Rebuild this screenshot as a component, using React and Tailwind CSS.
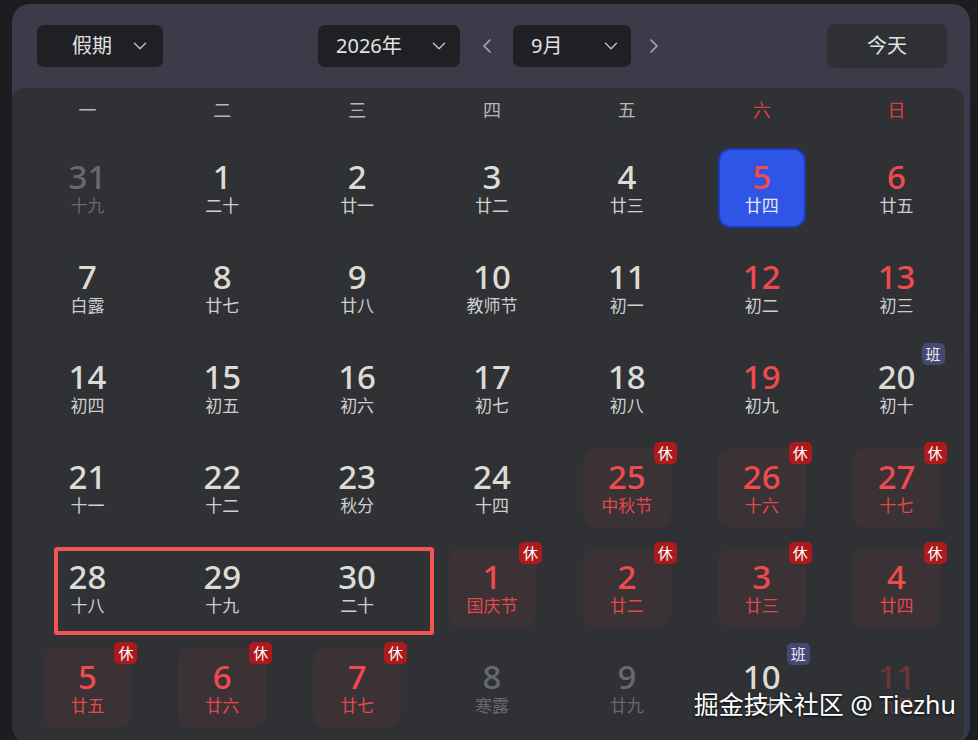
import React from 'react';
import { ChevronDown, ChevronLeft, ChevronRight } from 'lucide-react';

const WEEKDAYS = ['一', '二', '三', '四', '五', '六', '日'];

// rest = 休, work = 班, muted = 其他月份
const WEEKS = [
  [
    { d: 31, l: '十九', muted: true },
    { d: 1, l: '二十' },
    { d: 2, l: '廿一' },
    { d: 3, l: '廿二' },
    { d: 4, l: '廿三' },
    { d: 5, l: '廿四', today: true },
    { d: 6, l: '廿五' },
  ],
  [
    { d: 7, l: '白露' },
    { d: 8, l: '廿七' },
    { d: 9, l: '廿八' },
    { d: 10, l: '教师节' },
    { d: 11, l: '初一' },
    { d: 12, l: '初二' },
    { d: 13, l: '初三' },
  ],
  [
    { d: 14, l: '初四' },
    { d: 15, l: '初五' },
    { d: 16, l: '初六' },
    { d: 17, l: '初七' },
    { d: 18, l: '初八' },
    { d: 19, l: '初九' },
    { d: 20, l: '初十', work: true },
  ],
  [
    { d: 21, l: '十一' },
    { d: 22, l: '十二' },
    { d: 23, l: '秋分' },
    { d: 24, l: '十四' },
    { d: 25, l: '中秋节', rest: true },
    { d: 26, l: '十六', rest: true },
    { d: 27, l: '十七', rest: true },
  ],
  [
    { d: 28, l: '十八' },
    { d: 29, l: '十九' },
    { d: 30, l: '二十' },
    { d: 1, l: '国庆节', rest: true },
    { d: 2, l: '廿二', rest: true },
    { d: 3, l: '廿三', rest: true },
    { d: 4, l: '廿四', rest: true },
  ],
  [
    { d: 5, l: '廿五', rest: true },
    { d: 6, l: '廿六', rest: true },
    { d: 7, l: '廿七', rest: true },
    { d: 8, l: '寒露', muted: true },
    { d: 9, l: '廿九', muted: true },
    { d: 10, l: '三十', work: true },
    { d: 11, l: '九月', muted: true },
  ],
];

const Select = ({ label, className }) => (
  <div
    className={`flex h-[42px] items-center justify-between rounded-[7px] bg-[#1f2023] text-[20px] text-[#e2e2e2] ${className}`}
  >
    <span>{label}</span>
    <ChevronDown size={22} strokeWidth={1.6} className="text-[#bdbdbd]" />
  </div>
);

const DayCell = ({ cell, col }) => {
  const weekend = col >= 5;
  let numColor = 'text-[#dedbd4]';
  let lunarColor = 'text-[#cfcfcf]';
  let box = '';

  if (cell.today) {
    numColor = 'text-[#f24a4f]';
    lunarColor = 'text-[#e6e6f0]';
    box = 'bg-[#2f55e6] border-2 border-[#1c3bb8]';
  } else if (cell.rest) {
    numColor = 'text-[#ef4b4e]';
    lunarColor = 'text-[#e2484b]';
    box = 'bg-[#3a3234]';
  } else if (cell.muted) {
    numColor = weekend ? 'text-[#6b3639]' : 'text-[#67696c]';
    lunarColor = weekend ? 'text-[#6b3639]' : 'text-[#67696c]';
  } else if (weekend && !cell.work) {
    numColor = 'text-[#ef4b4e]';
  }

  return (
    <div className="flex h-[100px] items-center justify-center">
      <div className={`relative flex h-[80px] w-[88px] flex-col items-center justify-center rounded-[13px] ${box}`}>
        <span className={`text-[33px] font-medium leading-[34px] ${numColor}`}>{cell.d}</span>
        <span className={`mt-[2px] text-[17px] leading-[20px] ${lunarColor}`}>{cell.l}</span>
        {cell.rest && (
          <span className="absolute -right-[6px] -top-[6px] flex h-[22px] w-[23px] items-center justify-center rounded-[5px] bg-[#ad1a1c] text-[15px] text-white">
            休
          </span>
        )}
        {cell.work && (
          <span className="absolute -right-[4px] -top-[5px] flex h-[22px] w-[23px] items-center justify-center rounded-[5px] bg-[#444872] text-[15px] text-[#ececf4]">
            班
          </span>
        )}
      </div>
    </div>
  );
};

export default function App() {
  return (
    <div
      className="h-[740px] w-[978px] overflow-hidden bg-[#1c1d20] pt-[4px] pl-[12px]"
      style={{ fontFamily: '"Noto Sans", "Noto Sans CJK SC", sans-serif' }}
    >
      <div className="relative flex h-[740px] w-[958px] flex-col overflow-hidden rounded-[18px] bg-gradient-to-b from-[#3b3b4a] to-[#363747]">
        {/* 头部 */}
        <div className="grid h-[84px] shrink-0 grid-cols-[1fr_auto_1fr] items-center pl-[25px] pr-[23px]">
          <div>
            <Select label="假期" className="w-[126px] pl-[35px] pr-[12px]" />
          </div>
          <div className="flex items-center">
            <Select label="2026年" className="w-[142px] pl-[18px] pr-[10px]" />
            <ChevronLeft size={24} strokeWidth={1.6} className="ml-[15px] mr-[14px] text-[#a9a9b0]" />
            <Select label="9月" className="w-[118px] pl-[18px] pr-[9px]" />
            <ChevronRight size={24} strokeWidth={1.6} className="ml-[11px] text-[#a9a9b0]" />
          </div>
          <div className="flex justify-end">
            <div className="flex h-[44px] w-[120px] items-center justify-center rounded-[8px] bg-[#2e3036] text-[20px] text-[#e2e2e2]">
              今天
            </div>
          </div>
        </div>

        {/* 日历主体 */}
        <div className="mr-[6px] flex-1 rounded-[14px] bg-[#2f3135] pl-[8px]">
          <div className="grid h-[44px] grid-cols-7 items-center">
            {WEEKDAYS.map((w, i) => (
              <div
                key={w}
                className={`text-center text-[18px] ${i >= 5 ? 'text-[#dc3d3f]' : 'text-[#b7b7b7]'}`}
              >
                {w}
              </div>
            ))}
          </div>
          <div className="mt-[6px] flex flex-col">
            {WEEKS.map((week, r) => (
              <div key={r} className="grid grid-cols-7">
                {week.map((cell, c) => (
                  <DayCell key={c} cell={cell} col={c} />
                ))}
              </div>
            ))}
          </div>
        </div>

        {/* 标注框 */}
        <div className="absolute left-[42px] top-[543px] h-[88px] w-[380px] rounded-[3px] border-4 border-[#f25454]" />

        {/* 水印 */}
        <div className="absolute right-[14px] top-[682px] text-[25px] text-white [text-shadow:0_1px_3px_rgba(0,0,0,0.9)]">
          掘金技术社区 @ Tiezhu
        </div>
      </div>
    </div>
  );
}
